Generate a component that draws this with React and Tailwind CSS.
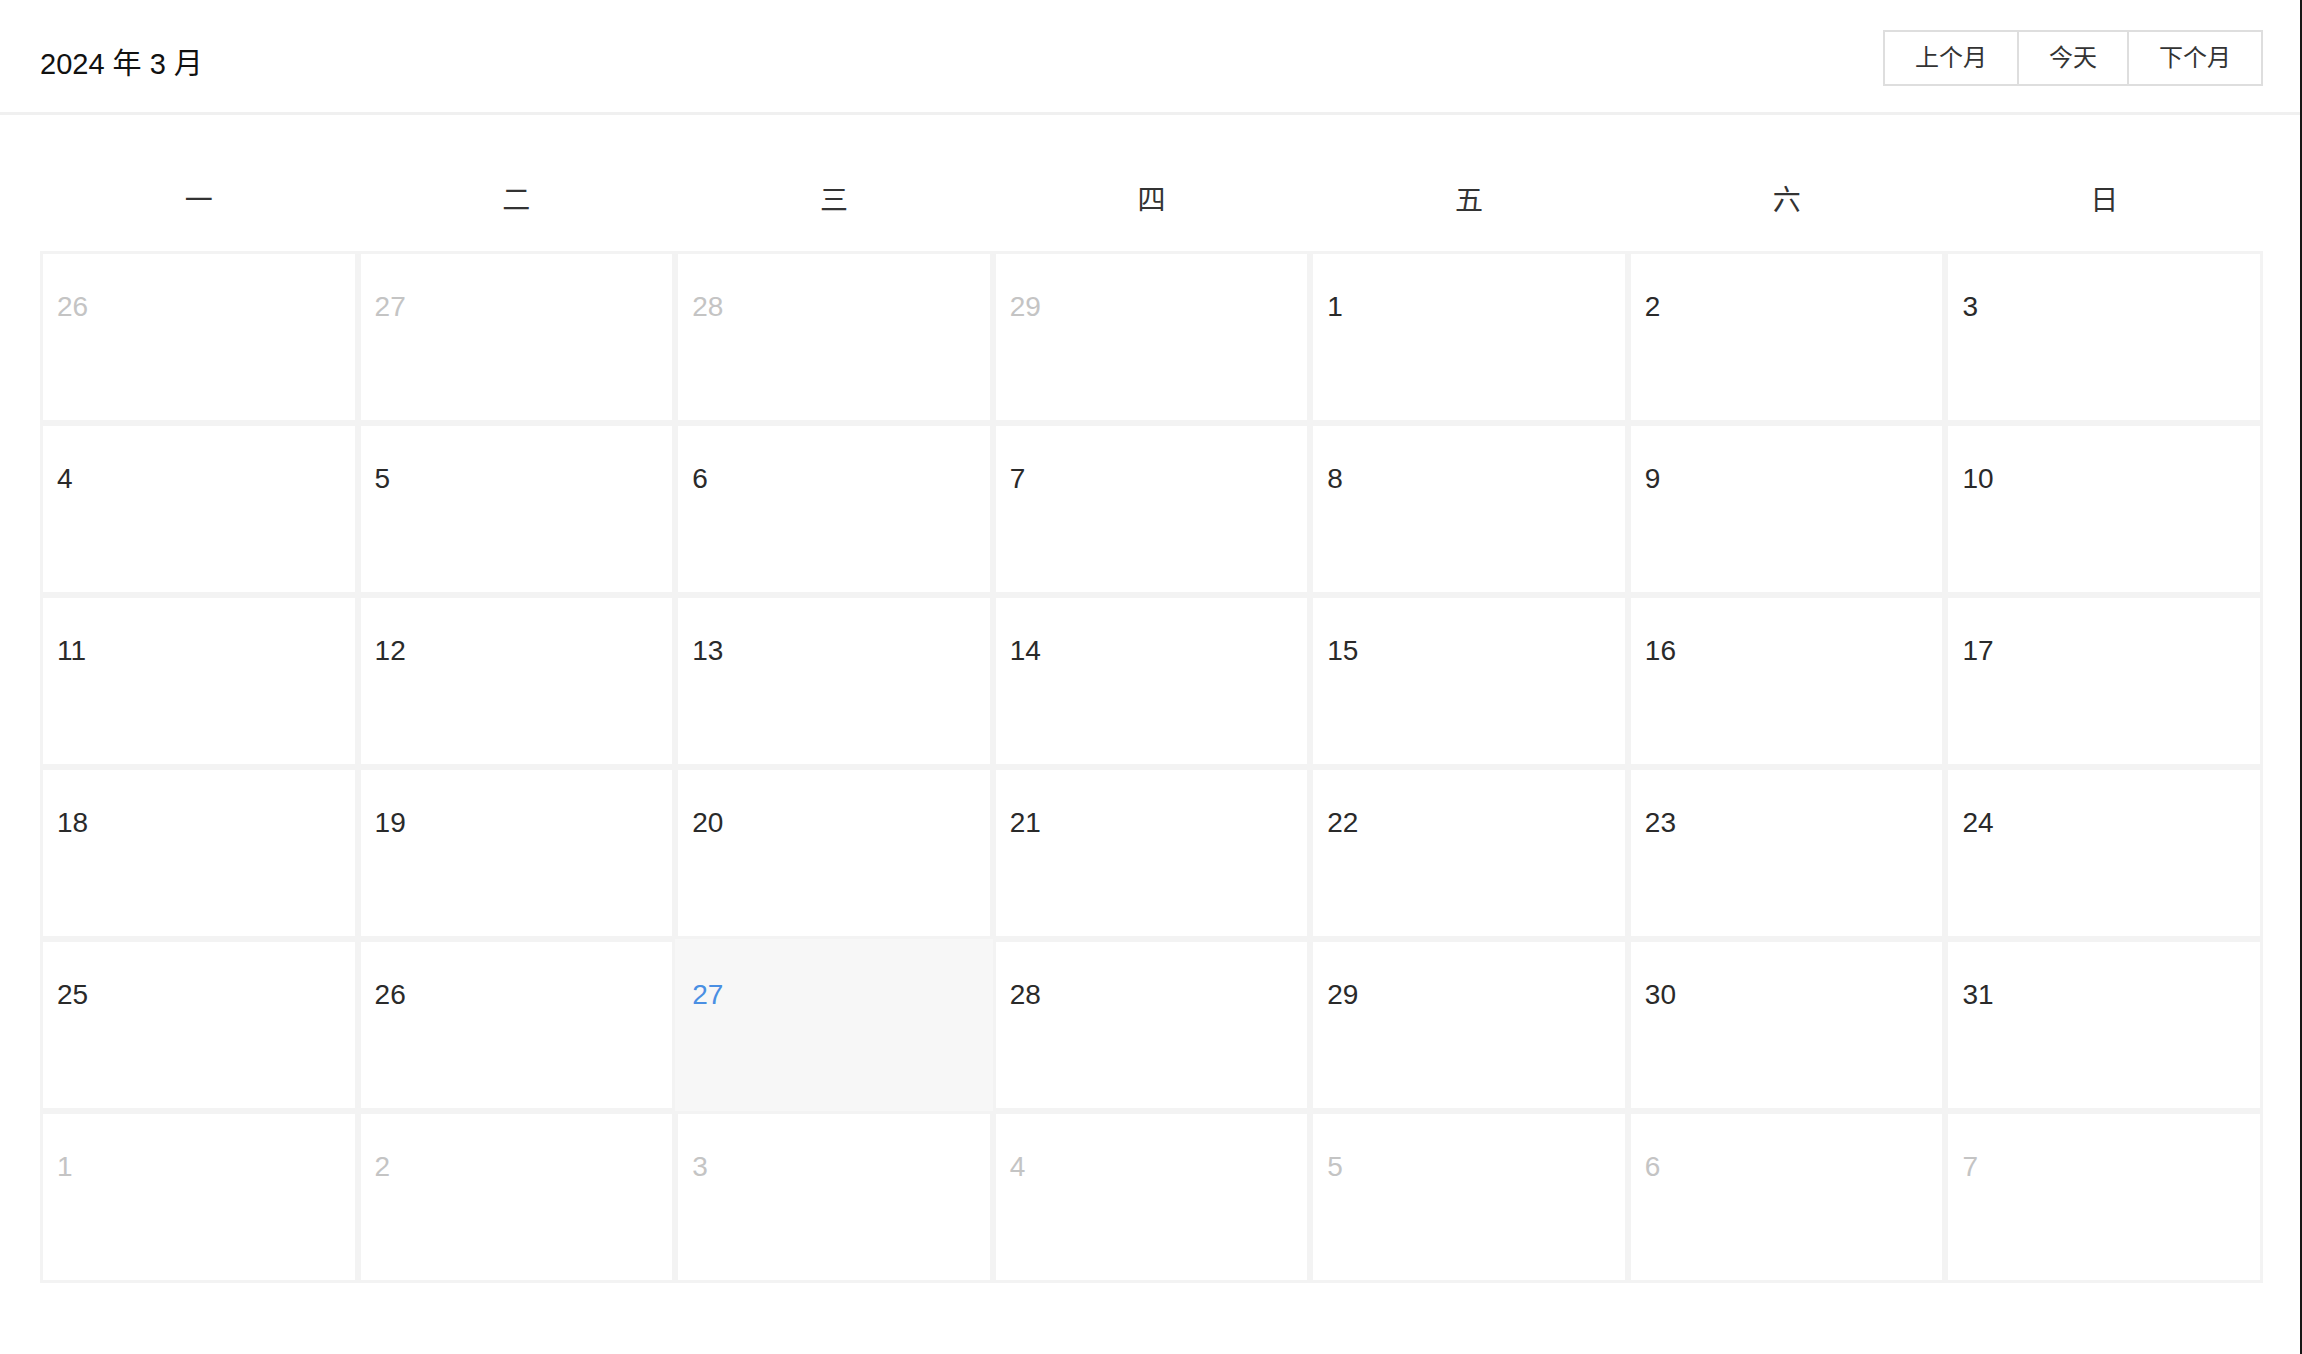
const FONT = { fontFamily: '"Liberation Sans", "Noto Sans CJK SC", sans-serif' };

const WEEKDAYS = ['一', '二', '三', '四', '五', '六', '日'];

// March 2024, Monday first
function buildDays() {
  const days = [];
  [26, 27, 28, 29].forEach((d) => days.push({ d, muted: true }));
  for (let d = 1; d <= 31; d++) days.push({ d, muted: false, today: d === 27 });
  for (let d = 1; d <= 7; d++) days.push({ d, muted: true });
  return days;
}

function Header() {
  return (
    <header className="flex justify-between h-[115px] pl-[40px] pr-[37px] border-b-[3px] border-[#f0f0f0]">
      <h1 className="mt-[43px] text-[29px] leading-[42px] text-[#111]">2024 年 3 月</h1>
      <div className="mt-[30px] flex h-[56px] border-2 border-[#dedede]">
        <button className="px-[30px] text-[24px] text-[#333] border-r-2 border-[#dedede] bg-white">上个月</button>
        <button className="px-[30px] text-[24px] text-[#333] border-r-2 border-[#dedede] bg-white">今天</button>
        <button className="px-[30px] text-[24px] text-[#333] bg-white">下个月</button>
      </div>
    </header>
  );
}

function DayCell({ day }) {
  let color = 'text-[#2a2a2a]';
  if (day.muted) color = 'text-[#c4c4c4]';
  if (day.today) color = 'text-[#4a8fe3]';
  return (
    <div
      className={
        'h-[172px] border-[3px] pt-[32px] px-[14px] text-[28px] leading-[42px] ' +
        (day.today ? 'bg-[#f7f7f7] border-[#f7f7f7] ' : 'bg-white border-[#f3f3f3] ') +
        color
      }
    >
      {day.d}
    </div>
  );
}

export default function App() {
  const days = buildDays();
  return (
    <div className="flex h-screen bg-white" style={FONT}>
      <div className="flex-1">
        <Header />

        <main className="pl-[40px] pr-[37px] pt-[36px]">
          {/* weekday labels */}
          <div className="grid grid-cols-7 h-[100px] items-center">
            {WEEKDAYS.map((w) => (
              <div key={w} className="text-center text-[28px] text-[#333]">{w}</div>
            ))}
          </div>

          {/* month grid */}
          <div className="grid grid-cols-7">
            {days.map((day, i) => (
              <DayCell key={i} day={day} />
            ))}
          </div>
        </main>
      </div>
      <div className="w-[2px] bg-[#161616]" />
    </div>
  );
}
